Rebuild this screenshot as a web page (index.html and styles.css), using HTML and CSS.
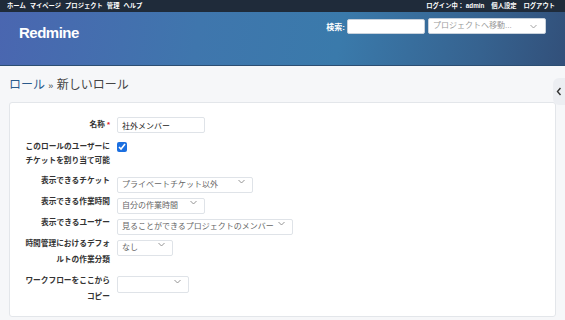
FILE: index.html
```html
<!DOCTYPE html>
<html lang="ja">
<head>
  <meta charset="UTF-8">
  <title>新しいロール - Redmine</title>
  <link rel="stylesheet" href="styles.css">
</head>
<body>
  <div class="top-menu">
    <ul class="menu-left">
      <li>ホーム</li>
      <li>マイページ</li>
      <li>プロジェクト</li>
      <li>管理</li>
      <li>ヘルプ</li>
    </ul>
    <ul class="menu-right">
      <li>ログイン中： admin</li>
      <li>個人設定</li>
      <li>ログアウト</li>
    </ul>
  </div>

  <div class="header">
    <h1>Redmine</h1>
    <div class="quick-search">
      <label>検索:</label>
      <input type="text" class="q">
      <span class="select-wrap jump">
        <span class="jump-text">プロジェクトへ移動...</span>
        <svg class="chev" width="7" height="5" viewBox="0 0 7 5"><path d="M0.5 1 L3.5 4 L6.5 1" fill="none" stroke="#999" stroke-width="0.9"/></svg>
      </span>
    </div>
  </div>

  <div class="main">
    <div class="sidebar-toggle">
      <svg width="6" height="9" viewBox="0 0 6 9"><path d="M4.5 1 L1.5 4.5 L4.5 8" fill="none" stroke="#333" stroke-width="1.4"/></svg>
    </div>

    <h2 class="crumb"><a href="#">ロール</a> <span class="raquo">»</span> 新しいロール</h2>

    <div class="box">
      <div class="row">
        <label class="lbl">名称 <span class="req">*</span></label>
        <input type="text" class="txt" value="社外メンバー">
      </div>
      <div class="row">
        <label class="lbl lbl-tight">このロールのユーザーに<br>チケットを割り当て可能</label>
        <input type="checkbox" class="chk" checked>
      </div>
      <div class="row">
        <label class="lbl">表示できるチケット</label>
        <span class="select-wrap w136">
          <select><option>プライベートチケット以外</option></select>
          <svg class="chev" width="7" height="5" viewBox="0 0 7 5"><path d="M0.5 1 L3.5 4 L6.5 1" fill="none" stroke="#888" stroke-width="0.9"/></svg>
        </span>
      </div>
      <div class="row">
        <label class="lbl">表示できる作業時間</label>
        <span class="select-wrap w88">
          <select><option>自分の作業時間</option></select>
          <svg class="chev" width="7" height="5" viewBox="0 0 7 5"><path d="M0.5 1 L3.5 4 L6.5 1" fill="none" stroke="#888" stroke-width="0.9"/></svg>
        </span>
      </div>
      <div class="row">
        <label class="lbl">表示できるユーザー</label>
        <span class="select-wrap w176">
          <select><option>見ることができるプロジェクトのメンバー</option></select>
          <svg class="chev" width="7" height="5" viewBox="0 0 7 5"><path d="M0.5 1 L3.5 4 L6.5 1" fill="none" stroke="#888" stroke-width="0.9"/></svg>
        </span>
      </div>
      <div class="row">
        <label class="lbl">時間管理におけるデフォ<br>ルトの作業分類</label>
        <span class="select-wrap w56">
          <select><option>なし</option></select>
          <svg class="chev" width="7" height="5" viewBox="0 0 7 5"><path d="M0.5 1 L3.5 4 L6.5 1" fill="none" stroke="#888" stroke-width="0.9"/></svg>
        </span>
      </div>
      <div class="row">
        <label class="lbl">ワークフローをここから<br>コピー</label>
        <span class="select-wrap w72 tall">
          <select><option></option></select>
          <svg class="chev" width="7" height="5" viewBox="0 0 7 5"><path d="M0.5 1 L3.5 4 L6.5 1" fill="none" stroke="#888" stroke-width="0.9"/></svg>
        </span>
      </div>
    </div>
  </div>
</body>
</html>
```

FILE: styles.css
```css
body {
  margin: 0;
  font-family: "Liberation Sans", "Noto Sans CJK JP", sans-serif;
  background-color: #f6f7f9;
  color: #333;
}
ul {
  list-style: none;
  margin: 0;
  padding: 0;
}

/* top menu */
.top-menu {
  height: 12px;
  background-color: #1f2b3a;
  color: white;
  font-size: 6.3px;
  font-weight: bold;
  line-height: 12px;
  display: flex;
  justify-content: space-between;
  padding: 0 10px 0 7px;
}
.top-menu ul {
  display: flex;
  gap: 4px;
}
.menu-right {
  gap: 7px !important;
}

/* header */
.header {
  height: 53px;
  background: linear-gradient(100deg, #4a66b0 0%, #3f76ad 35%, #3a7aab 60%, #36628f 85%, #32507a 100%);
  border-bottom: 1px solid #2c4e72;
  display: flex;
  justify-content: space-between;
  align-items: flex-start;
  padding: 0 19px;
  color: white;
}
.header h1 {
  margin: 12px 0 0 0;
  font-size: 15px;
  font-weight: bold;
  letter-spacing: -0.5px;
}
.quick-search {
  display: flex;
  align-items: center;
  gap: 3px;
  margin-top: 6px;
  font-size: 8px;
  font-weight: bold;
}
.quick-search label {
  margin-right: -1px;
}
.q {
  width: 78px;
  height: 15px;
  box-sizing: border-box;
  border: 1px solid #c9d2dc;
  border-radius: 2px;
  padding: 0 3px;
  margin: 0;
}
.jump {
  width: 118px;
  height: 15px;
  background: white;
  border: 1px solid #c9d2dc;
  border-radius: 2px;
  box-sizing: border-box;
  display: flex;
  align-items: center;
  padding-left: 4px;
  font-weight: normal;
  color: #999;
  font-size: 8px;
}

/* main */
.main {
  position: relative;
  padding: 10px 9px 0 9px;
}
.sidebar-toggle {
  position: absolute;
  right: 0;
  top: 12px;
  width: 12px;
  height: 27px;
  background-color: #eceef2;
  border-radius: 6px 0 0 6px;
  display: flex;
  align-items: center;
  justify-content: center;
}
.crumb {
  margin: 0 0 7px 0;
  font-size: 12px;
  font-weight: normal;
  color: #444;
  line-height: 18px;
}
.crumb a {
  color: #2a5a8c;
  text-decoration: none;
}
.raquo {
  font-size: 9px;
}

.box {
  background: white;
  border: 1px solid #e3e6ea;
  border-radius: 3px;
  width: 547px;
  box-sizing: border-box;
  padding: 14px 0 11px 0;
  display: flex;
  flex-direction: column;
  gap: 5px;
}
.row {
  display: flex;
  align-items: flex-start;
  gap: 7px;
}
.lbl {
  width: 100px;
  text-align: right;
  font-size: 7.7px;
  font-weight: bold;
  color: #333;
  line-height: 16px;
  flex-shrink: 0;
}
.lbl-tight {
  line-height: 14px;
  padding-top: 2px;
}
.req {
  color: #d22;
}
.txt {
  width: 88px;
  height: 16px;
  box-sizing: border-box;
  border: 1px solid #dfe3e8;
  border-radius: 2px;
  font-family: inherit;
  font-size: 8px;
  padding: 0 4px;
  margin: 0;
  color: #222;
}
.chk {
  width: 10px;
  height: 10px;
  margin: 4px 0 0 0;
  accent-color: #1b6fe0;
}

.select-wrap {
  position: relative;
  display: inline-block;
  height: 16px;
}
.select-wrap select {
  width: 100%;
  height: 100%;
  box-sizing: border-box;
  appearance: none;
  -webkit-appearance: none;
  background: white;
  border: 1px solid #dfe3e8;
  border-radius: 2px;
  font-family: inherit;
  font-size: 8px;
  color: #666;
  padding: 0 14px 0 4px;
  margin: 0;
}
.select-wrap .chev {
  position: absolute;
  right: 8px;
  top: 6px;
}
.jump .chev {
  right: 8px;
  top: 5px;
}
.w136 { width: 136px; }
.w88 { width: 88px; }
.w176 { width: 176px; }
.w56 { width: 56px; }
.w72 { width: 72px; }
.tall { height: 17px; }
```
